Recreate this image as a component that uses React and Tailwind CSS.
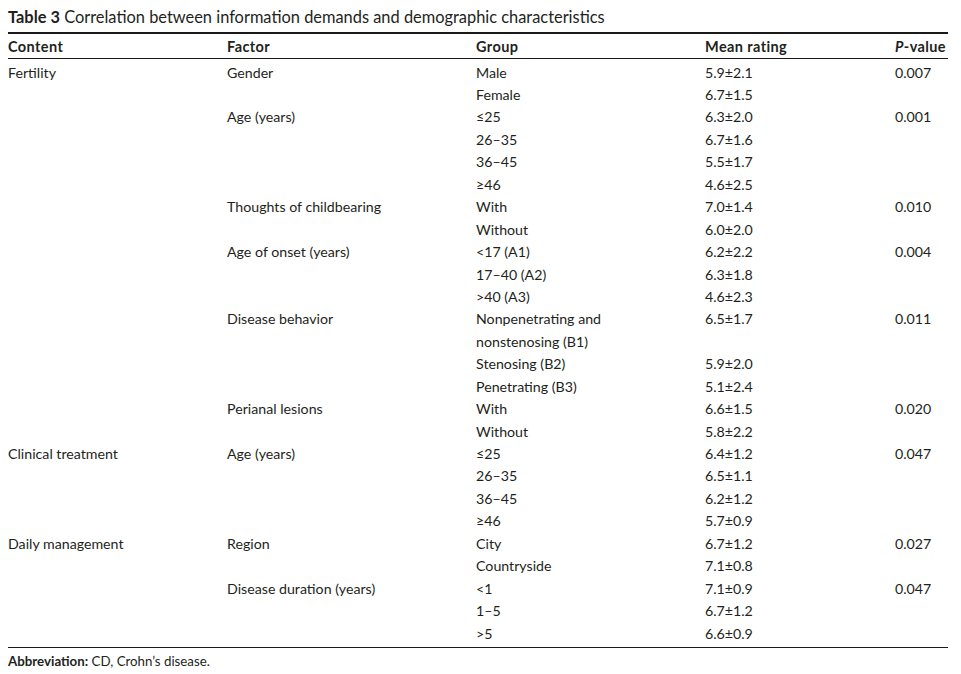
import React from "react";

const rows = [
  ["Fertility", "Gender", "Male", "5.9±2.1", "0.007"],
  ["", "", "Female", "6.7±1.5", ""],
  ["", "Age (years)", "≤25", "6.3±2.0", "0.001"],
  ["", "", "26–35", "6.7±1.6", ""],
  ["", "", "36–45", "5.5±1.7", ""],
  ["", "", "≥46", "4.6±2.5", ""],
  ["", "Thoughts of childbearing", "With", "7.0±1.4", "0.010"],
  ["", "", "Without", "6.0±2.0", ""],
  ["", "Age of onset (years)", "<17 (A1)", "6.2±2.2", "0.004"],
  ["", "", "17–40 (A2)", "6.3±1.8", ""],
  ["", "", ">40 (A3)", "4.6±2.3", ""],
  ["", "Disease behavior", "Nonpenetrating and", "6.5±1.7", "0.011"],
  ["", "", "nonstenosing (B1)", "", ""],
  ["", "", "Stenosing (B2)", "5.9±2.0", ""],
  ["", "", "Penetrating (B3)", "5.1±2.4", ""],
  ["", "Perianal lesions", "With", "6.6±1.5", "0.020"],
  ["", "", "Without", "5.8±2.2", ""],
  ["Clinical treatment", "Age (years)", "≤25", "6.4±1.2", "0.047"],
  ["", "", "26–35", "6.5±1.1", ""],
  ["", "", "36–45", "6.2±1.2", ""],
  ["", "", "≥46", "5.7±0.9", ""],
  ["Daily management", "Region", "City", "6.7±1.2", "0.027"],
  ["", "", "Countryside", "7.1±0.8", ""],
  ["", "Disease duration (years)", "<1", "7.1±0.9", "0.047"],
  ["", "", "1–5", "6.7±1.2", ""],
  ["", "", ">5", "6.6±0.9", ""],
];

const cols = "grid grid-cols-[219px_249px_229px_190px_1fr]";

export default function App() {
  return (
    <div className="w-[961px] h-[674px] bg-white text-[#231f20] font-['Lato','Liberation_Sans',sans-serif] px-[8px] pt-[6px]">
      <div className="w-[940px]">
        <p className="text-[16.4px] leading-[21px]">
          <span className="font-bold">Table 3</span> Correlation between information demands and demographic characteristics
        </p>
        <div className="mt-[5px] h-[2px] bg-[#1a1a1a]" />
        <div className={`${cols} h-[25px] pt-[1px] items-center text-[14.5px] font-bold tracking-[0.4px] border-b border-[#1a1a1a]`}>
          <span>Content</span>
          <span>Factor</span>
          <span>Group</span>
          <span>Mean rating</span>
          <span>
            <i>P</i>-value
          </span>
        </div>
        <div className="pt-[2px] pb-[3px] border-b border-[#1a1a1a]">
          {rows.map((r, i) => (
            <div key={i} className={`${cols} h-[22.44px] items-center text-[14.2px]`}>
              {r.map((c, j) => (
                <span key={j}>{c}</span>
              ))}
            </div>
          ))}
        </div>
        <p className="mt-[4px] text-[13.3px] leading-[18px]">
          <span className="font-bold">Abbreviation:</span> CD, Crohn’s disease.
        </p>
      </div>
    </div>
  );
}
